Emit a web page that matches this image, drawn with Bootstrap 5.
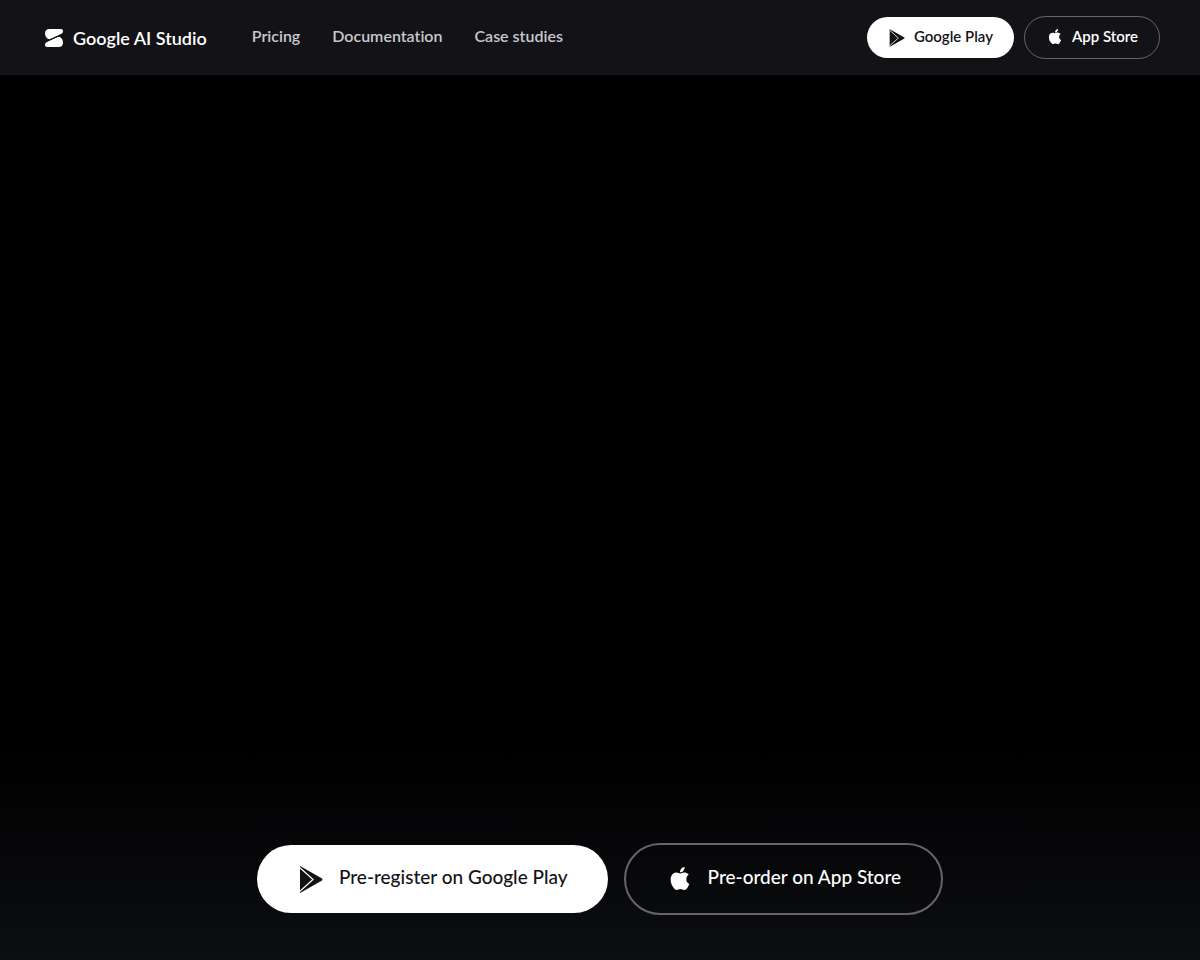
<!DOCTYPE html>
<html lang="en">
<head>
<meta charset="utf-8">
<meta name="viewport" content="width=device-width, initial-scale=1">
<title>Google AI Studio</title>
<link href="https://cdn.jsdelivr.net/npm/bootstrap@5.3.0/dist/css/bootstrap.min.css" rel="stylesheet">
<style>
  body { background: #000; font-family: Lato, "Liberation Sans", sans-serif; font-variant-ligatures: none; }
  .site-header { background: #131317; padding: 16px 40px 15px 45px; border-bottom: 1px solid #17171b; }
  .brand { gap: 10px; }
  .brand-name { font-size: 18px; font-weight: 600; line-height: 24px; color: #fff; }
  .site-links { gap: 32px; margin-left: 45px; padding-bottom: 4px; }
  .site-links a { color: #c8c8cd; font-size: 16px; font-weight: 600; line-height: 24px; }
  .store-links { gap: 10px; }
  .pill { --bs-btn-border-radius: 36px; --bs-btn-font-weight: 500; display: inline-flex; align-items: center; }
  .pill-light { --bs-btn-bg: #fff; --bs-btn-color: #131317; --bs-btn-hover-bg: #e8e8ea; --bs-btn-border-width: 0; }
  .pill-dark { --bs-btn-color: #fff; --bs-btn-border-color: #66666a; --bs-btn-hover-color: #fff; --bs-btn-hover-border-color: #aaa; }
  .pill-sm { --bs-btn-font-size: 15px; --bs-btn-font-weight: 600; --bs-btn-line-height: 19px; --bs-btn-padding-y: 10px; --bs-btn-padding-x: 21px; gap: 8px; }
  .pill-lg { --bs-btn-font-size: 19px; --bs-btn-line-height: 24px; --bs-btn-padding-y: 20px; --bs-btn-padding-x: 40px; gap: 14px; }
  .pill-sm span { padding-bottom: 2px; }
  .pill-lg span { padding-bottom: 4px; }
  .pill-dark svg { margin-bottom: 2px; }
  .pill-lg.pill-dark { --bs-btn-border-width: 2px; }
  .hero { padding: 0 24px 45px; background: linear-gradient(to top, #0d0e12, #000 210px); }
</style>
</head>
<body class="min-vh-100 d-flex flex-column">
<svg class="d-none" aria-hidden="true">
  <symbol id="play" viewBox="0 0 24 27">
    <path fill="#131317" d="M1 0Q1 0 2 .6L23 12.6Q24 13.5 23 14.4L2 26.4L1 27Z"/>
    <path fill="none" stroke="#fff" stroke-width="1.200" d="M1 1.800L14 13.500L1 25.200"/>
  </symbol>
  <symbol id="apple" viewBox="0 0 24 24">
    <path fill="currentColor" d="M12.152 6.896c-.948 0-2.415-1.078-3.96-1.040-2.040.027-3.910 1.183-4.961 3.014-2.117 3.675-.546 9.103 1.519 12.090 1.013 1.454 2.208 3.090 3.792 3.039 1.520-.065 2.090-.987 3.935-.987 1.831 0 2.350.987 3.960.948 1.637-.026 2.676-1.480 3.676-2.948 1.156-1.688 1.636-3.325 1.662-3.415-.039-.013-3.182-1.221-3.220-4.857-.026-3.040 2.480-4.494 2.597-4.559-1.429-2.090-3.623-2.324-4.390-2.376-2-.156-3.675 1.090-4.610 1.090zM15.530 3.830c.843-1.012 1.400-2.427 1.245-3.830-1.207.052-2.662.805-3.532 1.818-.780.896-1.454 2.338-1.273 3.714 1.338.104 2.715-.688 3.559-1.701"/>
  </symbol>
</svg>
<header class="site-header d-flex flex-wrap align-items-center justify-content-between gap-2">
  <nav class="d-flex flex-wrap align-items-center">
    <a href="#" class="brand d-flex align-items-center text-decoration-none">
      <svg width="18" height="18" viewBox="0 0 18 18" fill="#fff" aria-hidden="true">
        <path d="M4.500 0H16Q18 0 18 2V2.500Q18 4 16.500 4.800L5 10.200Q3.500 10.500 1.800 9Q0 7.500 0 4.500Q0 0 4.500 0Z"/>
        <path d="M13.500 18H2Q0 18 0 16V15.500Q0 14 1.500 13.200L13 7.800Q14.500 7.500 16.200 9Q18 10.500 18 13.500Q18 18 13.500 18Z"/>
        <path d="M0 12.700L18 5.300" fill="none" stroke="#131317" stroke-width="1"/>
      </svg>
      <span class="brand-name">Google AI Studio</span>
    </a>
    <div class="site-links d-flex flex-wrap">
      <a href="#" class="text-decoration-none">Pricing</a>
      <a href="#" class="text-decoration-none">Documentation</a>
      <a href="#" class="text-decoration-none">Case studies</a>
    </div>
  </nav>
  <div class="store-links d-flex align-items-center">
    <a href="#" class="btn pill pill-light pill-sm"><svg width="18" height="18" aria-hidden="true"><use href="#play"/></svg><span>Google Play</span></a>
    <a href="#" class="btn pill pill-dark pill-sm"><svg width="18" height="15" aria-hidden="true"><use href="#apple"/></svg><span>App Store</span></a>
  </div>
</header>
<main class="hero flex-grow-1 d-flex flex-wrap align-items-end align-content-end justify-content-center">
  <div class="d-flex flex-wrap align-items-center justify-content-center gap-3">
    <a href="#" class="btn pill pill-light pill-lg"><svg width="28" height="27" aria-hidden="true"><use href="#play"/></svg><span>Pre-register on Google Play</span></a>
    <a href="#" class="btn pill pill-dark pill-lg"><svg width="28" height="23" aria-hidden="true"><use href="#apple"/></svg><span>Pre-order on App Store</span></a>
  </div>
</main>
<script src="https://cdn.jsdelivr.net/npm/bootstrap@5.3.0/dist/js/bootstrap.bundle.min.js"></script>
</body>
</html>
